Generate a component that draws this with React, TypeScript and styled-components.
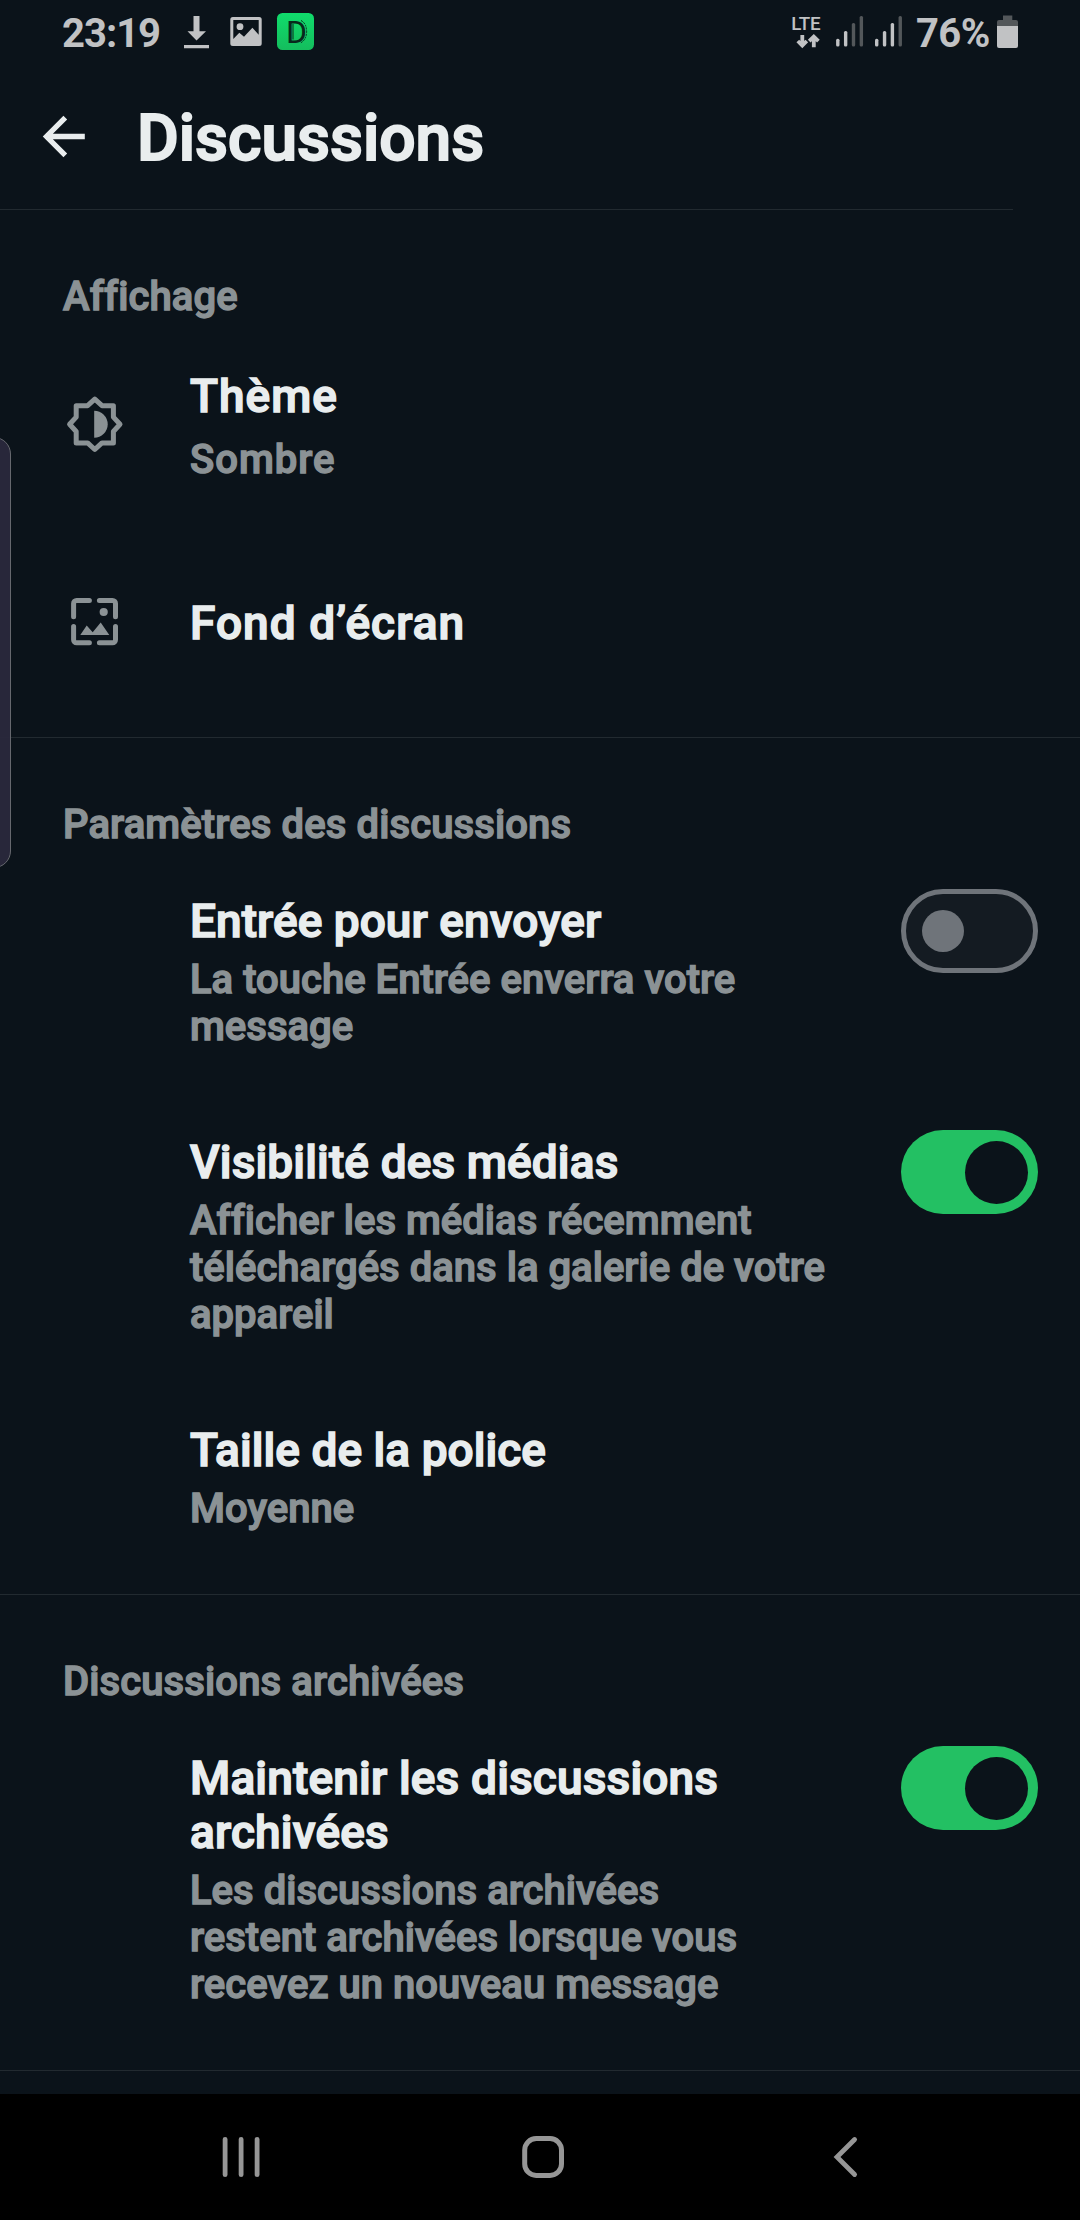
import React, { useState } from "react";
import styled, { createGlobalStyle } from "styled-components";

const color = {
  bg: "#0b131a",
  text: "#e9edee",
  muted: "#8b9295",
  line: "#222a30",
  status: "#c1c2c4",
  statusDim: "#53575a",
  green: "#23c063",
  toggleGrey: "#6f747a",
  nav: "#969696",
};

const GlobalStyle = createGlobalStyle`
  html, body { margin: 0; padding: 0; background: ${color.bg}; }
  * { box-sizing: border-box; }
`;

const Screen = styled.div`
  position: relative;
  display: flex;
  flex-direction: column;
  width: 1080px;
  height: 2220px;
  overflow: hidden;
  background: ${color.bg};
  font-family: Roboto, "Liberation Sans", sans-serif;
  font-weight: 500;
`;

const StatusBar = styled.div`
  display: flex;
  justify-content: space-between;
  flex: none;
  height: 66px;
  padding: 0 62px 0 62px;
  color: ${color.status};
`;

const StatusGroup = styled.div`
  display: flex;
  align-items: flex-start;
`;

const StatusText = styled.span<{ $width: number; $spacing: number }>`
  width: ${(p) => p.$width}px;
  padding-top: 10px;
  font-size: 40px;
  font-weight: 700;
  line-height: 47px;
  letter-spacing: ${(p) => p.$spacing}px;
  white-space: nowrap;
`;

const Header = styled.header`
  display: flex;
  flex: none;
  height: 143px;
  padding: 35px 0 0 39px;
`;

const BackButton = styled.button`
  width: 98px;
  height: 69px;
  padding: 0;
  border: 0;
  background: none;
  color: ${color.text};
  text-align: left;
`;

const PageTitle = styled.h1`
  margin: 0;
  color: ${color.text};
  font-size: 64px;
  font-weight: 500;
  line-height: 75px;
  -webkit-text-stroke: 2px ${color.text};
`;

const Divider = styled.hr<{ $width?: number }>`
  flex: none;
  width: ${(p) => p.$width ?? 1080}px;
  height: 1px;
  margin: 0;
  border: 0;
  background: ${color.line};
`;

const Section = styled.section<{ $bottom?: number }>`
  display: flex;
  flex-direction: column;
  flex: none;
  padding: 63px 42px ${(p) => p.$bottom ?? 62}px 63px;
`;

const SectionHeading = styled.h2`
  margin: 0;
  color: ${color.muted};
  font-size: 40px;
  font-weight: 500;
  line-height: 47px;
  letter-spacing: 0.12px;
  -webkit-text-stroke: 1.4px ${color.muted};
`;

const IconRows = styled.div`
  display: flex;
  flex-direction: column;
  gap: 107px;
  padding-top: 49px;
`;

const ToggleRows = styled.div`
  display: flex;
  flex-direction: column;
  gap: 80px;
  padding-top: 41px;
`;

const Row = styled.div`
  display: flex;
  align-items: flex-start;
`;

const IconCell = styled.div<{ $top?: number }>`
  flex: none;
  width: 127px;
  padding-top: ${(p) => p.$top ?? 0}px;
  color: ${color.muted};

  svg {
    display: block;
  }
`;

const RowText = styled.div<{ $gap: number; $top: number; $spacing?: number }>`
  display: flex;
  flex: 1;
  flex-direction: column;
  gap: ${(p) => p.$gap}px;
  padding-top: ${(p) => p.$top}px;
  letter-spacing: ${(p) => p.$spacing ?? 0.02}px;
`;

const RowTitle = styled.div<{ $spacing?: number }>`
  color: ${color.text};
  font-size: 46px;
  line-height: 54px;
  letter-spacing: ${(p) => (p.$spacing === undefined ? "inherit" : `${p.$spacing}px`)};
  white-space: pre-line;
  -webkit-text-stroke: 1.5px ${color.text};
`;

const RowDetail = styled.div`
  color: ${color.muted};
  font-size: 40px;
  line-height: 47px;
  white-space: pre-line;
  -webkit-text-stroke: 1.4px ${color.muted};
`;

const ToggleTrack = styled.button<{ $on: boolean }>`
  display: flex;
  flex: none;
  align-items: center;
  justify-content: ${(p) => (p.$on ? "flex-end" : "flex-start")};
  width: 137px;
  height: 84px;
  padding: ${(p) => (p.$on ? "0 10px" : "0 16px")};
  border: ${(p) => (p.$on ? "0" : `5px solid ${color.toggleGrey}`)};
  border-radius: 42px;
  background: ${(p) => (p.$on ? color.green : "#141b22")};
`;

const ToggleKnob = styled.span<{ $on: boolean }>`
  width: ${(p) => (p.$on ? 63 : 42)}px;
  height: ${(p) => (p.$on ? 63 : 42)}px;
  border-radius: 50%;
  background: ${(p) => (p.$on ? color.bg : color.toggleGrey)};
`;

const EdgeHandle = styled.div`
  position: absolute;
  top: 437px;
  left: -30px;
  width: 41px;
  height: 431px;
  border: 1px solid #66686e;
  border-radius: 17px;
  background: rgba(42, 41, 59, 0.96);
`;

const NavBar = styled.nav`
  display: flex;
  flex: none;
  align-items: center;
  justify-content: space-between;
  height: 126px;
  margin-top: auto;
  padding: 0 205px 0 211px;
  background: #000;
`;

const NavButton = styled.button`
  display: flex;
  width: 60px;
  height: 60px;
  padding: 0;
  border: 0;
  background: none;
`;

function NotificationIcons() {
  return (
    <svg width="140" height="66" viewBox="180 0 140 66" fill={color.status}>
      <defs>
        <linearGradient id="badge" x1="0" y1="0" x2="0" y2="1">
          <stop offset="0" stopColor="#10dc6c" />
          <stop offset="1" stopColor="#14bd5d" />
        </linearGradient>
      </defs>
      <path d="M193.5 16h6v15.3h6.5l-9.5 9.2-9-9.2h6zM184 45h25v3.3h-25z" />
      <path
        fillRule="evenodd"
        d="M232.8 17h26.4a2.5 2.5 0 0 1 2.5 2.5v24a2.5 2.5 0 0 1-2.5 2.5h-26.4a2.5 2.5 0 0 1-2.5-2.5v-24a2.5 2.5 0 0 1 2.5-2.5zM233.3 20v19l6-6.3 4.7 4 8.4-9 6.3 7V20z"
      />
      <circle cx="240" cy="26.7" r="3.4" />
      <rect x="277" y="13" width="37" height="37" rx="5.5" fill="url(#badge)" />
      <text x="286" y="42.8" fontSize="32" fontWeight="400" fill="#08291c">
        D
      </text>
      <path d="M293 24v15.5" stroke="#08291c" strokeWidth="1" />
      <path d="M301 20.5q5.6 3 5.6 11t-6 11.5" fill="none" stroke="#08291c" strokeWidth="1" strokeDasharray="2 1" />
    </svg>
  );
}

function SignalBars({ start, lit }: { start: number; lit: number }) {
  return (
    <>
      {[38.7, 31, 23, 16].map((top, i) => (
        <rect
          key={top}
          x={start + i * 7.85}
          y={top}
          width="3.4"
          height={46.6 - top}
          rx="1.5"
          fill={i < lit ? color.status : color.statusDim}
        />
      ))}
    </>
  );
}

function NetworkIcons() {
  return (
    <svg width="125" height="66" viewBox="791 0 125 66">
      <text x="791.2" y="29.6" fontSize="18.8" fontWeight="500" letterSpacing="-0.3" fill={color.status}>
        LTE
      </text>
      <g fill="none" stroke={color.status} strokeWidth="3.8">
        <path d="M802.3 35v11M797.8 41l4.5 4.6 4.5-4.6" />
        <path d="M813.8 47.3V37M809.2 41.2l4.6-4.6 4.6 4.6" />
      </g>
      <SignalBars start={836.1} lit={2} />
      <SignalBars start={875} lit={3} />
    </svg>
  );
}

function BatteryIcon() {
  return (
    <svg width="22" height="66" viewBox="996 0 22 66">
      <path d="M1003 15.5h9.3V20h3.7a2 2 0 0 1 2 2v4h-21v-4a2 2 0 0 1 2-2h4z" fill={color.statusDim} />
      <path d="M997 26h21v20a2 2 0 0 1-2 2h-17a2 2 0 0 1-2-2z" fill={color.status} />
    </svg>
  );
}

function BackArrow() {
  return (
    <svg width="50" height="69" viewBox="39 101 50 69" fill="none" stroke="currentColor" strokeWidth="5.3">
      <path d="M84.8 136.5H46M65.3 117.6 46.5 136.5 65.3 155.4" />
    </svg>
  );
}

function ThemeIcon() {
  return (
    <svg width="64" height="64" viewBox="-31.8 -32.3 64 64">
      <path
        d="M0-25.2 7.2-18.6H18.6V-7.2L25.2 0 18.6 7.2V18.6H7.2L0 25.2-7.2 18.6H-18.6V7.2L-25.2 0-18.6-7.2V-18.6H-7.2Z"
        fill="none"
        stroke="currentColor"
        strokeWidth="5"
        strokeLinejoin="round"
      />
      <path d="M-.6-13.5a13.5 13.5 0 0 1 0 27z" fill="currentColor" />
    </svg>
  );
}

function WallpaperIcon() {
  return (
    <svg width="64" height="64" viewBox="63 590 64 64">
      <g fill="none" stroke="currentColor" strokeWidth="5" strokeLinecap="round">
        <path d="M73.6 616.8V603.5a3 3 0 0 1 3-3H89.4" />
        <path d="M99.4 600.5H112.5a3 3 0 0 1 3 3V616.8" />
        <path d="M115.5 626.4V639.8a3 3 0 0 1-3 3H99.4" />
        <path d="M89.4 642.8H76.6a3 3 0 0 1-3-3V626.4" />
      </g>
      <circle cx="103.7" cy="612" r="4.1" fill="currentColor" />
      <path d="M80.3 635l6.4-9.4 6 6.6 8-9.8 8.6 12.6z" fill="currentColor" />
    </svg>
  );
}

function Toggle({ initial }: { initial: boolean }) {
  const [on, setOn] = useState(initial);
  return (
    <ToggleTrack type="button" role="switch" aria-checked={on} $on={on} onClick={() => setOn(!on)}>
      <ToggleKnob $on={on} />
    </ToggleTrack>
  );
}

interface SettingProps {
  title: string;
  detail: string;
  spacing?: number;
  toggle?: boolean;
}

function Setting({ title, detail, spacing = 0.05, toggle }: SettingProps) {
  return (
    <Row>
      <IconCell />
      <RowText $gap={8} $top={5}>
        <RowTitle $spacing={spacing}>{title}</RowTitle>
        <RowDetail>{detail}</RowDetail>
      </RowText>
      {toggle !== undefined && <Toggle initial={toggle} />}
    </Row>
  );
}

export default function App() {
  return (
    <Screen>
      <GlobalStyle />
      <StatusBar>
        <StatusGroup>
          <StatusText $width={118} $spacing={-1}>23:19</StatusText>
          <NotificationIcons />
        </StatusGroup>
        <StatusGroup>
          <NetworkIcons />
          <StatusText $width={80} $spacing={-0.6}>76%</StatusText>
          <BatteryIcon />
        </StatusGroup>
      </StatusBar>

      <Header>
        <BackButton type="button">
          <BackArrow />
        </BackButton>
        <PageTitle>Discussions</PageTitle>
      </Header>
      <Divider $width={1013} />

      <Section $bottom={83}>
        <SectionHeading>Affichage</SectionHeading>
        <IconRows>
          <Row>
            <IconCell $top={23}>
              <ThemeIcon />
            </IconCell>
            <RowText $gap={13} $top={0} $spacing={1}>
              <RowTitle>Thème</RowTitle>
              <RowDetail>Sombre</RowDetail>
            </RowText>
          </Row>
          <Row>
            <IconCell>
              <WallpaperIcon />
            </IconCell>
            <RowText $gap={0} $top={6} $spacing={1.05}>
              <RowTitle>Fond d’écran</RowTitle>
            </RowText>
          </Row>
        </IconRows>
      </Section>
      <Divider />

      <Section>
        <SectionHeading>Paramètres des discussions</SectionHeading>
        <ToggleRows>
          <Setting title="Entrée pour envoyer" detail={"La touche Entrée enverra votre\nmessage"} toggle={false} />
          <Setting
            title="Visibilité des médias"
            spacing={0.13}
            detail={"Afficher les médias récemment\ntéléchargés dans la galerie de votre\nappareil"}
            toggle={true}
          />
          <Setting title="Taille de la police" detail="Moyenne" />
        </ToggleRows>
      </Section>
      <Divider />

      <Section>
        <SectionHeading>Discussions archivées</SectionHeading>
        <ToggleRows>
          <Setting
            title={"Maintenir les discussions\narchivées"}
            spacing={0.16}
            detail={"Les discussions archivées\nrestent archivées lorsque vous\nrecevez un nouveau message"}
            toggle={true}
          />
        </ToggleRows>
      </Section>
      <Divider />

      <NavBar>
        <NavButton type="button" aria-label="Applications récentes">
          <svg width="60" height="60" viewBox="211 2127 60 60" stroke={color.nav} strokeWidth="4.8" strokeLinecap="round">
            <path d="M225.1 2139.3v35.4M241.1 2139.3v35.4M257.1 2139.3v35.4" />
          </svg>
        </NavButton>
        <NavButton type="button" aria-label="Accueil">
          <svg width="60" height="60" viewBox="513 2127 60 60" fill="none" stroke={color.nav} strokeWidth="5">
            <rect x="524.7" y="2138.6" width="36.8" height="36.8" rx="11.5" />
          </svg>
        </NavButton>
        <NavButton type="button" aria-label="Retour">
          <svg width="60" height="60" viewBox="815 2127 60 60" fill="none" stroke={color.nav} strokeWidth="4.8" strokeLinecap="round">
            <path d="M854.6 2139.5 837 2157l17.6 17.5" />
          </svg>
        </NavButton>
      </NavBar>

      <EdgeHandle />
    </Screen>
  );
}
